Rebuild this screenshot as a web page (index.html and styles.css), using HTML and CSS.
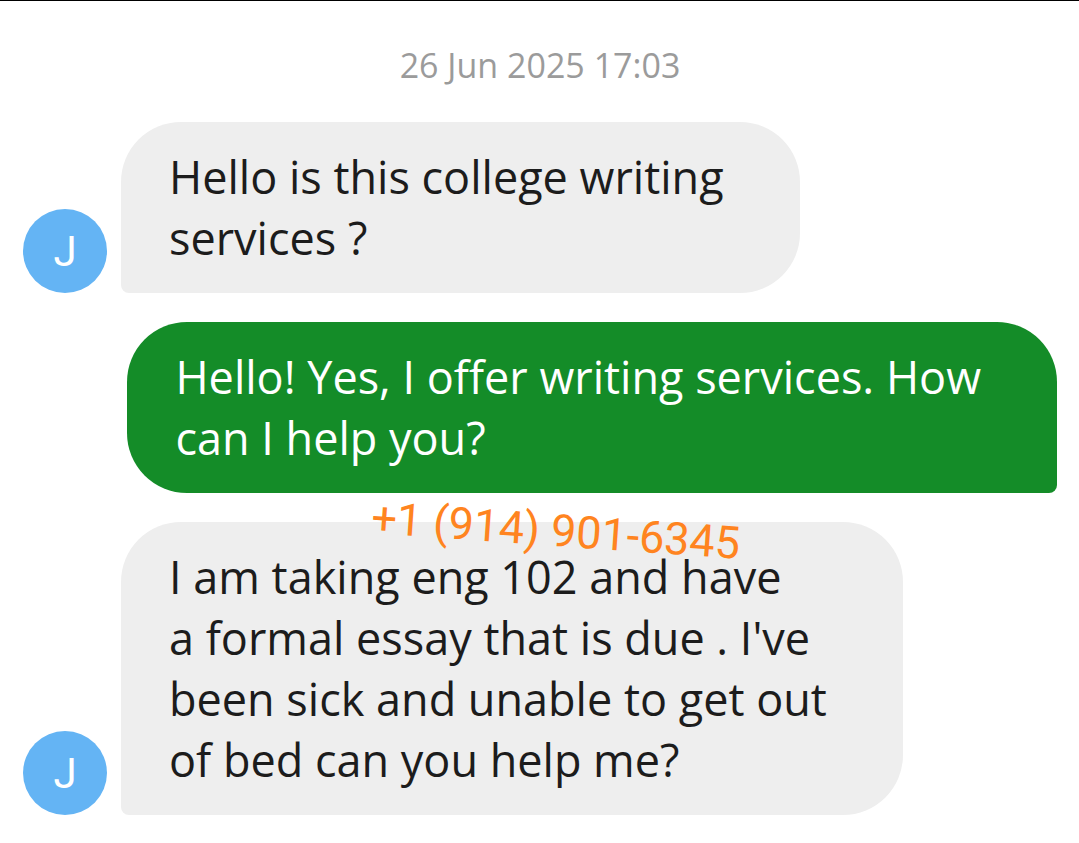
FILE: index.html
```html
<!DOCTYPE html>
<html lang="en">
<head>
    <meta charset="UTF-8">
    <meta name="viewport" content="width=device-width, initial-scale=1.0">
    <title>Messages</title>
    <link rel="stylesheet" href="styles.css">
</head>
<body>
    <main class="chat">
        <time class="date" datetime="2025-06-26T17:03">26 Jun 2025 17:03</time>

        <div class="row received">
            <div class="avatar">J</div>
            <p class="bubble">Hello is this college writing<br>services ?</p>
        </div>

        <div class="row sent">
            <p class="bubble">Hello! Yes, I offer writing services. How<br>can I help you?</p>
        </div>

        <div class="row received">
            <div class="avatar">J</div>
            <p class="bubble">I am taking eng 102 and have<br>a formal essay that is due . I've<br>been sick and unable to get out<br>of bed can you help me?</p>
            <span class="phone">+1 (914) 901-6345</span>
        </div>
    </main>
</body>
</html>
```

FILE: styles.css
```css
body {
    margin: 0;
    background-color: white;
    font-family: "Open Sans", sans-serif;
}

.chat {
    display: flex;
    flex-direction: column;
    gap: 29px;
    padding: 38px 22px 28px 23px;
    border-top: 1px solid black;
}

.date {
    margin-bottom: 2px;
    color: #9b9b9b;
    font-size: 34px;
    line-height: 52px;
    text-align: center;
}

.row {
    display: flex;
    align-items: flex-end;
    gap: 14px;
    position: relative;
}

.sent {
    justify-content: flex-end;
}

.avatar {
    display: flex;
    align-items: center;
    justify-content: center;
    width: 84px;
    height: 84px;
    border-radius: 50%;
    background-color: #64b4f4;
    color: white;
    font-family: Roboto, sans-serif;
    font-size: 42px;
}

.bubble {
    margin: 0;
    padding: 24px 76px 25px 48px;
    border-radius: 60px 60px 60px 8px;
    background-color: #eeeeee;
    color: #1c1c1c;
    font-size: 45px;
    line-height: 61px;
}

.sent .bubble {
    border-radius: 60px 60px 8px 60px;
    background-color: #148c28;
    color: white;
}

.phone {
    position: absolute;
    top: -17px;
    left: 348px;
    color: #ff8420;
    font-family: Roboto, sans-serif;
    font-size: 45px;
    line-height: 52px;
    white-space: nowrap;
    transform: rotate(4deg);
}
```
